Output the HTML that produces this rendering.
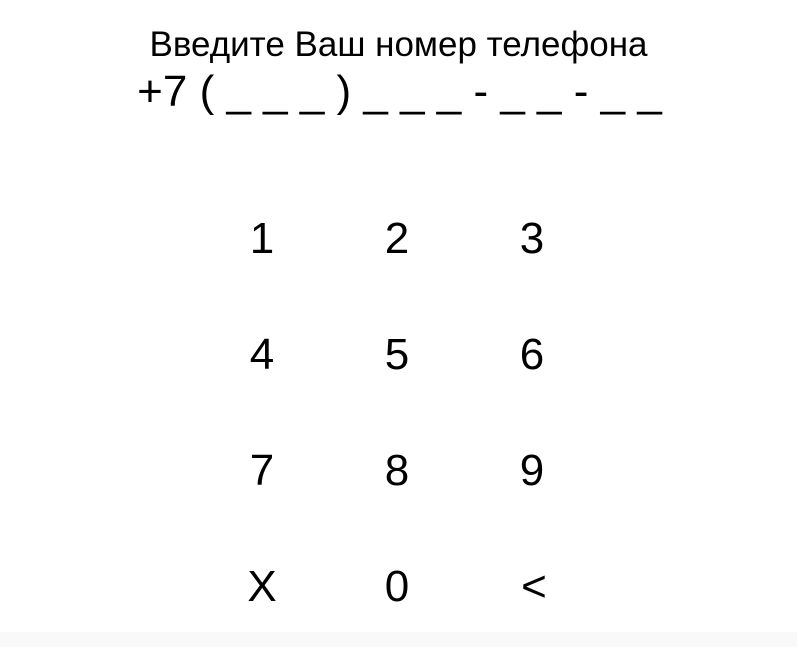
<!DOCTYPE html>
<html><head><meta charset="utf-8"><style>
html,body{margin:0;padding:0;width:797px;height:647px;overflow:hidden;background:#fff;font-family:"Liberation Sans","DejaVu Sans",sans-serif;color:#000;position:relative}
.t{position:absolute;left:0;width:797px;text-align:center;white-space:nowrap}
.k{position:absolute;width:80px;text-align:center;font-size:44px;line-height:44px}
.bot{position:absolute;left:0;top:632px;width:797px;height:15px;background:#f9f9f9}
</style></head><body>
<div class="t" style="top:25px;font-size:35px;line-height:40px">Введите Ваш номер телефона</div>
<div class="t" style="top:67px;font-size:44px;line-height:50px;left:1px">+7 ( _ _ _ ) _ _ _ - _ _ - _ _</div>
<div class="k" style="left:222px;top:217px">1</div>
<div class="k" style="left:357px;top:217px">2</div>
<div class="k" style="left:492px;top:217px">3</div>
<div class="k" style="left:222px;top:333px">4</div>
<div class="k" style="left:357px;top:333px">5</div>
<div class="k" style="left:492px;top:333px">6</div>
<div class="k" style="left:222px;top:449px">7</div>
<div class="k" style="left:357px;top:449px">8</div>
<div class="k" style="left:492px;top:449px">9</div>
<div class="k" style="left:222px;top:565px">X</div>
<div class="k" style="left:357px;top:565px">0</div>
<div class="k" style="left:494px;top:565px">&lt;</div>
<div class="bot"></div>
</body></html>
